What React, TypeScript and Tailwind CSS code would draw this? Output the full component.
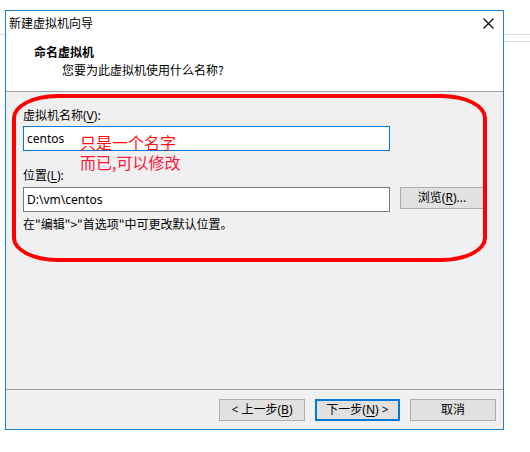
import React from 'react'

const ui = { fontFamily: '"Noto Sans", "Noto Sans CJK SC", sans-serif' }
const cjk = { fontFamily: '"Noto Sans CJK SC", sans-serif' }

function Key({ k }: { k: string }) {
  return <span className="underline underline-offset-2">{k}</span>
}

function WinButton({ children, primary, w }: { children: React.ReactNode; primary?: boolean; w: string }) {
  return (
    <button
      className={
        'h-[22px] bg-[#e1e1e1] text-[12px] text-black flex items-center justify-center leading-none ' +
        w +
        (primary ? ' border-2 border-[#0078d7]' : ' border border-[#adadad]')
      }
      style={ui}
    >
      {children}
    </button>
  )
}

export default function App() {
  return (
    <div className="relative w-[530px] h-[452px] bg-white overflow-hidden" style={ui}>
      {/* bits of the window behind */}
      <div className="absolute left-[504px] top-[34px] w-[26px] h-px bg-[#d5dde5]" />
      <div className="absolute left-[504px] top-[41px] w-[26px] h-px bg-[#d5dde5]" />
      <div className="absolute left-0 top-[34px] w-[5px] h-px bg-[#d5dde5]" />

      <div className="pt-[10px] pl-[5px]">
        <div className="w-[499px] h-[420px] border border-[#1883d7] flex flex-col bg-[#f0f0f0]">
          {/* title bar */}
          <div className="h-[24px] bg-white flex items-center justify-between pl-[3px] pr-[9px]">
            <span className="text-[12px] text-black leading-none" style={cjk}>新建虚拟机向导</span>
            <svg width="11" height="11" viewBox="0 0 11 11">
              <path d="M0.5 0.5 L10.5 10.5 M10.5 0.5 L0.5 10.5" stroke="#000" strokeWidth="1.1" />
            </svg>
          </div>

          {/* header */}
          <div className="h-[57px] bg-white border-b border-[#a0a0a0] pl-[28px] pt-[9px]">
            <div className="text-[12px] font-bold text-black leading-[16px]" style={cjk}>命名虚拟机</div>
            <div className="text-[12px] text-black leading-[16px] mt-[2px] pl-[28px]" style={cjk}>您要为此虚拟机使用什么名称?</div>
          </div>

          {/* body */}
          <div className="flex-1 pl-[17px] pt-[16px] text-[12px] text-black">
            <div className="leading-[16px]">虚拟机名称(<Key k="V" />):</div>
            <div className="mt-[2px] w-[367px] h-[25px] bg-white border border-[#0078d7] flex items-center px-[3px] leading-none">centos</div>

            <div className="mt-[17px] leading-[16px]">位置(<Key k="L" />):</div>
            <div className="mt-[3px] flex gap-[10px] items-start">
              <div className="w-[367px] h-[25px] bg-white border border-[#7a7a7a] flex items-center px-[3px] leading-none">D:\vm\centos</div>
              <WinButton w="w-[84px]">浏览(<Key k="R" />)...</WinButton>
            </div>
            <div className="mt-[4px] leading-[16px]" style={cjk}>{'在"编辑">"首选项"中可更改默认位置。'}</div>
          </div>

          {/* footer */}
          <div className="h-[40px] border-t border-[#a0a0a0] flex justify-end items-start pt-[9px] pr-[7px] gap-[10px]">
            <WinButton w="w-[86px]">&lt; 上一步(<Key k="B" />)</WinButton>
            <WinButton w="w-[85px]" primary>下一步(<Key k="N" />) &gt;</WinButton>
            <WinButton w="w-[86px]">取消</WinButton>
          </div>
        </div>
      </div>

      {/* red annotation */}
      <div className="absolute left-[12px] top-[94px] w-[475px] h-[168px] border-[4px] border-[#ff0000] rounded-[46px/24px] pointer-events-none" />
      <div className="absolute left-[80px] top-[132px] text-[16px] leading-[20px]" style={cjk}>
        <div className="text-[#ff1010]">只是一个名字</div>
        <div className="text-[#fc1838]">而已,可以修改</div>
      </div>
    </div>
  )
}
